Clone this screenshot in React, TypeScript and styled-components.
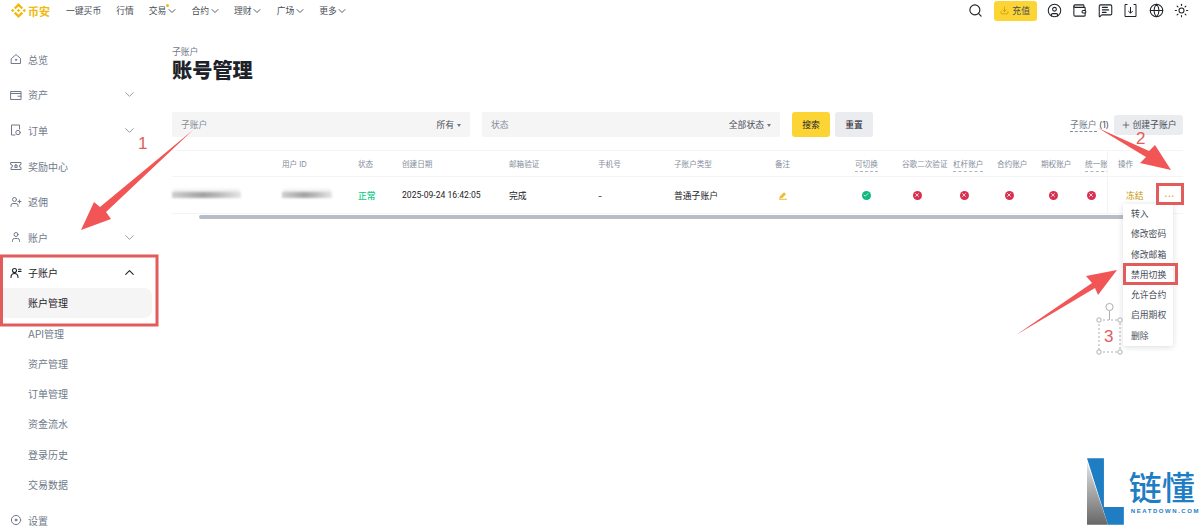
import React from 'react';
import styled, { createGlobalStyle } from 'styled-components';
import { ChevronDown, ChevronUp, CircleUser, Download, Globe, MessageSquareText, Plus, Search, Sun, UserPlus, User, Wallet, Check, X } from 'lucide-react';

const GlobalStyle = createGlobalStyle`
  html, body {
    margin: 0;
    height: 527px;
    overflow: hidden;
    background: #fff;
    color: #1e2329;
    font-family: "Inter", "Noto Sans CJK SC", sans-serif;
  }
  * { box-sizing: border-box; }
`;

const Page = styled.div`
  position: relative;
  width: 1200px;
  height: 527px;
  overflow: hidden;
`;

const TopBar = styled.header`
  display: flex;
  align-items: center;
  height: 21px;
  padding: 0 11px 0 11px;
  font-size: 8.8px;
  color: #474d57;
`;

const Logo = styled.div`
  display: flex;
  align-items: center;
  gap: 2px;
  width: 55px;
  color: #f0b90b;
  font-size: 11px;
  font-weight: 700;
`;

const TopNav = styled.nav`
  display: flex;
  align-items: center;
  gap: 15px;
`;

const TopLink = styled.span`
  position: relative;
  display: flex;
  align-items: center;
  gap: 1px;
  white-space: nowrap;

  svg {
    margin: 0 -1.5px;
  }
`;

const HotDot = styled.i`
  position: absolute;
  top: 0;
  left: 17px;
  width: 3px;
  height: 3px;
  border-radius: 50%;
  background: #f0b90b;
`;

const TopActions = styled.div`
  display: flex;
  align-items: center;
  gap: 10.4px;
  margin-left: auto;
  color: #1e2329;
`;

const DepositButton = styled.button`
  display: flex;
  align-items: center;
  justify-content: center;
  gap: 3px;
  width: 43px;
  height: 20px;
  padding: 0;
  border: 0;
  border-radius: 3px;
  background: #fcd535;
  color: #474d57;
  font: inherit;
  font-size: 8.8px;
`;

const Body = styled.div`
  display: flex;
`;

const Sidebar = styled.aside`
  flex: 0 0 172px;
  padding-top: 20.5px;
  font-size: 10px;
  color: #707a8a;
`;

const NavItem = styled.div<{ $active?: boolean }>`
  display: flex;
  align-items: center;
  height: 35.6px;
  padding: 0 35px 0 10px;
  color: ${(p) => (p.$active ? '#1e2329' : '#707a8a')};

  svg.lead {
    flex: 0 0 12px;
    margin-right: 6px;
  }
  svg.chev {
    margin-left: auto;
    color: ${(p) => (p.$active ? '#1e2329' : '#848e9c')};
  }
`;

const SettingsItem = styled(NavItem)`
  margin-top: 2.5px;
`;

const SubList = styled.div`
  margin-top: -3px;
`;

const SubItem = styled.div<{ $active?: boolean }>`
  display: flex;
  align-items: center;
  height: 30.3px;
  margin-right: 20px;
  padding-left: 28px;
  border-radius: 0 8px 8px 0;
  background: ${(p) => (p.$active ? '#f5f5f5' : 'transparent')};
  color: ${(p) => (p.$active ? '#1e2329' : '#707a8a')};
`;

const Main = styled.main`
  flex: 1;
  padding: 25px 17px 0 0;
`;

const Crumb = styled.div`
  height: 12px;
  font-size: 8.8px;
  line-height: 12px;
  color: #707a8a;
`;

const Title = styled.h1`
  margin: 0;
  font-size: 20.2px;
  line-height: 26px;
  font-weight: 900;
  color: #1e2329;
`;

const FilterRow = styled.div`
  display: flex;
  align-items: center;
  height: 25px;
  margin-top: 28px;
  font-size: 8.8px;
`;

const SelectBox = styled.div`
  display: flex;
  align-items: center;
  justify-content: space-between;
  width: 298px;
  height: 25px;
  margin-right: 12px;
  padding: 0 9px;
  border-radius: 2px;
  background: #f5f5f5;
  color: #848e9c;
`;

const SelectValue = styled.span`
  display: flex;
  align-items: center;
  gap: 3px;
  color: #474d57;

  &::after {
    content: '';
    border: 2.5px solid transparent;
    border-top: 3px solid #707a8a;
    margin-top: 3px;
  }
`;

const FilterButton = styled.button<{ $primary?: boolean }>`
  width: 38px;
  height: 25px;
  margin-right: 5px;
  padding: 0;
  border: 0;
  border-radius: 3px;
  background: ${(p) => (p.$primary ? '#fcd535' : '#eaecef')};
  color: #1e2329;
  font: inherit;
`;

const AccountCount = styled.span`
  margin-left: auto;
  color: #474d57;
  white-space: nowrap;
`;

const Dashed = styled.span`
  border-bottom: 1px dashed #848e9c;
  color: #707a8a;
  padding-bottom: 1px;
`;

const CreateButton = styled.button`
  display: flex;
  align-items: center;
  justify-content: center;
  gap: 2px;
  width: 69px;
  height: 20px;
  margin-left: 5px;
  padding: 0;
  border: 0;
  border-radius: 3px;
  background: #eaecef;
  color: #474d57;
  font: inherit;
  font-size: 8.8px;
`;

const Table = styled.div`
  position: relative;
  margin-top: 13px;
  border-top: 1px solid #f5f5f5;
`;

const columns = '110px 76px 44px 107px 89px 76px 101px 80px 47px 51px 44px 44px 44px 22px 76px';

const Row = styled.div<{ $head?: boolean }>`
  display: grid;
  grid-template-columns: ${columns};
  align-items: center;
  height: ${(p) => (p.$head ? '26px' : '37px')};
  padding-bottom: ${(p) => (p.$head ? '1px' : '0')};
  border-bottom: 1px solid #f3f4f5;
  font-size: ${(p) => (p.$head ? '7.6px' : '8.8px')};
  color: ${(p) => (p.$head ? '#848e9c' : '#1e2329')};
`;

const Clip = styled.span`
  display: block;
  overflow: hidden;
  padding: 3px 0;
  white-space: nowrap;
`;

const HeadHint = styled.span`
  border-bottom: 1px dashed #aeb4bc;
  padding-bottom: 2px;
`;

const ActionCell = styled.div<{ $head?: boolean }>`
  position: relative;
  display: flex;
  align-items: center;
  height: 100%;
  padding-left: ${(p) => (p.$head ? '10px' : '18px')};
  border-left: 1px solid #f3f4f5;
`;

const Freeze = styled.span`
  color: #c99400;
`;

const MoreDots = styled.span`
  margin: 0 0 4px 21px;
  color: #d9a93a;
  font-size: 9px;
  font-weight: 600;
  letter-spacing: 0.5px;
`;

const Blurred = styled.div<{ $w: number }>`
  width: ${(p) => p.$w}px;
  height: 6px;
  background: linear-gradient(90deg, #cfcfcf, #a2a2a2 45%, #bdbdbd 70%, #e6e6e6);
  box-shadow: 0 -4px 2px -1px #efefef;
  filter: blur(1.1px);
`;

const Active = styled.span`
  color: #0ecb81;
  font-weight: 500;
`;

const DateText = styled.span`
  font-family: "Roboto", "Noto Sans CJK SC", sans-serif;
  font-size: 8.6px;
  color: #1e2329;
`;

const IconCell = styled.div<{ $inset: number }>`
  display: flex;
  padding-left: ${(p) => p.$inset}px;
`;

const StatusDot = styled.span<{ $ok?: boolean }>`
  display: flex;
  align-items: center;
  justify-content: center;
  width: 9px;
  height: 9px;
  border-radius: 50%;
  background: ${(p) => (p.$ok ? '#10b981' : '#d9304f')};
  color: #fff;
`;

const Scrollbar = styled.div`
  width: 973px;
  height: 4px;
  margin: 1px 0 0 27px;
  border-radius: 2px;
  background: #b7bdc6;
`;

const Menu = styled.ul`
  position: absolute;
  top: 27px;
  left: 15px;
  z-index: 2;
  width: 50px;
  margin: 0;
  padding: 0;
  list-style: none;
  background: #fff;
  border-radius: 2px;
  box-shadow: 0 1px 6px rgba(0, 0, 0, 0.14);
  font-size: 8.8px;
  color: #474d57;
`;

const MenuItem = styled.li`
  height: 20.3px;
  padding-left: 8px;
  line-height: 20.3px;
  white-space: nowrap;
`;

const Overlay = styled.svg`
  position: absolute;
  inset: 0;
  z-index: 3;
  pointer-events: none;
`;

const Watermark = styled.div`
  position: absolute;
  right: 0;
  bottom: 0;
  z-index: 3;
  display: flex;
  width: 113px;
  height: 70px;
`;

const WatermarkText = styled.div`
  margin: 13px 0 0 5px;
  color: #1f7dc4;
`;

const WatermarkName = styled.div`
  font-size: 33px;
  line-height: 36px;
  font-weight: 500;
  white-space: nowrap;
`;

const WatermarkUrl = styled.div`
  margin: 2px 0 0 2px;
  font-family: "Liberation Sans", sans-serif;
  font-size: 6px;
  font-weight: 700;
  letter-spacing: 1.55px;
  white-space: nowrap;
`;

const line = { fill: 'none', stroke: 'currentColor', strokeWidth: 1, strokeLinecap: 'round', strokeLinejoin: 'round' } as const;

const BinanceMark = () => (
  <svg width="15" height="15" viewBox="0 0 24 24" fill="#f0b90b">
    <path d="M7.3 10.1L12 5.4l4.7 4.7 2.7-2.7L12 0 4.6 7.4zM0 12l2.7-2.7L5.4 12l-2.7 2.7zM7.3 13.9L12 18.6l4.7-4.7 2.7 2.7L12 24l-7.4-7.4zM18.6 12l2.7-2.7L24 12l-2.7 2.7zM14.7 12L12 9.3l-2.7 2.7 2.7 2.7z" />
  </svg>
);

const HomeIcon = () => (
  <svg className="lead" width="12" height="12" viewBox="0 0 12 12" {...line}>
    <path d="M1.5 5.5L6 1.5l4.5 4v5h-9z" />
    <circle cx="6" cy="6.8" r="0.7" />
  </svg>
);
const PurseIcon = () => (
  <svg className="lead" width="12" height="12" viewBox="0 0 12 12" {...line}>
    <path d="M1 2.5h10v8H1zM1 4.5h10M8 7.2h3" />
  </svg>
);
const OrderIcon = () => (
  <svg className="lead" width="12" height="12" viewBox="0 0 12 12" {...line}>
    <path d="M5 11H1.5V1h8v4" />
    <circle cx="8" cy="8.5" r="2.2" />
  </svg>
);
const TicketIcon = () => (
  <svg className="lead" width="12" height="12" viewBox="0 0 12 12" {...line}>
    <path d="M1 2.5h10v2a1.5 1.5 0 000 3v2H1v-2a1.5 1.5 0 000-3z" />
    <path d="M6 4.5l.6 1.1 1.1.2-.8.8.2 1.1-1.1-.5-1.1.5.2-1.1-.8-.8 1.1-.2z" />
  </svg>
);
const TeamIcon = () => (
  <svg className="lead" width="12" height="12" viewBox="0 0 12 12" {...line} strokeWidth={1.1} color="#1e2329">
    <circle cx="4.5" cy="3.5" r="2" />
    <path d="M1 10.5c0-2.5 1.5-4 3.5-4s3.5 1.5 3.5 4M8.5 2.2H11M8.5 4.4H11" />
  </svg>
);
const SettingIcon = () => (
  <svg className="lead" width="12" height="12" viewBox="0 0 12 12" {...line}>
    <circle cx="6" cy="6" r="4.6" />
    <circle cx="6" cy="6" r="0.9" fill="currentColor" />
  </svg>
);
const ImportIcon = () => (
  <svg width="15" height="15" viewBox="0 0 15 15" fill="none" stroke="currentColor" strokeWidth="1">
    <path d="M4.5 1.5h-2.500v12h11v-12h-2.500M7.500 4v6M5.300 8l2.200 2.200L9.700 8" />
  </svg>
);
const PencilIcon = () => (
  <svg width="10" height="9" viewBox="0 0 10 9" fill="#eebb33">
    <path d="M1 7.600L2.200 5 6 1.200 8 3.200 4.200 7zM1 7.800h8v1H1z" />
  </svg>
);

const sideItems = [
  { label: '总览', icon: <HomeIcon /> },
  { label: '资产', icon: <PurseIcon />, more: true },
  { label: '订单', icon: <OrderIcon />, more: true },
  { label: '奖励中心', icon: <TicketIcon /> },
  { label: '返佣', icon: <UserPlus className="lead" size={12} strokeWidth={2} /> },
  { label: '账户', icon: <User className="lead" size={12} strokeWidth={2} />, more: true },
];
const subItems = ['账户管理', 'API管理', '资产管理', '订单管理', '资金流水', '登录历史', '交易数据'];
const menuItems = ['转入', '修改密码', '修改邮箱', '禁用切换', '允许合约', '启用期权', '删除'];
const insets: [number, boolean][] = [[6.5, true], [10.5, false], [6.5, false], [7.5, false], [7.5, false], [1.5, false]];

const Annotations = () => (
  <Overlay width="1200" height="527" viewBox="0 0 1200 527">
    <g fill="#f25555">
      <polygon points="193,130 100,207 94,202 81,230 111,219 106,212" />
      <polygon points="1098,128 1149,151 1155,145 1171,170 1140,163 1146,157" />
      <polygon points="1016,335 1092,283 1086,276 1117,270 1098,295 1095,288" />
    </g>
    <g fill="none" stroke="#e25c5c" strokeWidth="3">
      <rect x="1.500" y="256" width="155.500" height="69" />
      <rect x="1157.500" y="184.500" width="25" height="19" />
      <rect x="1124.500" y="264.500" width="52" height="19" />
    </g>
    <g fill="#e25c5c" fontFamily="'Liberation Sans', sans-serif" fontSize="17">
      <text x="138" y="149">1</text>
      <text x="1136" y="144">2</text>
      <text x="1104" y="342">3</text>
    </g>
    <g fill="#fff" stroke="#9a9a9a" strokeWidth="0.8">
      <rect x="1099" y="320" width="21" height="32" fill="none" strokeDasharray="2 2" />
      <path d="M1109.500 311v9" fill="none" />
      <circle cx="1109.500" cy="307" r="3.600" />
      <circle cx="1099" cy="320" r="2.200" />
      <circle cx="1120" cy="320" r="2.200" />
      <circle cx="1099" cy="352" r="2.200" />
      <circle cx="1120" cy="352" r="2.200" />
    </g>
  </Overlay>
);

export default function App() {
  return (
    <Page>
      <GlobalStyle />
      <TopBar>
        <Logo>
          <BinanceMark />
          币安
        </Logo>
        <TopNav>
          <TopLink>一键买币</TopLink>
          <TopLink>行情</TopLink>
          {['交易', '合约', '理财', '广场', '更多'].map((name, i) => (
            <TopLink key={name}>
              {name}
              {i === 0 && <HotDot />}
              <ChevronDown size={12} strokeWidth={1.8} />
            </TopLink>
          ))}
        </TopNav>
        <TopActions>
          <Search size={15} strokeWidth={1.8} />
          <DepositButton>
            <Download size={9} strokeWidth={2} color="#c99400" />
            充值
          </DepositButton>
          <CircleUser size={15} strokeWidth={1.7} />
          <Wallet size={15} strokeWidth={1.7} />
          <MessageSquareText size={15} strokeWidth={1.7} />
          <ImportIcon />
          <Globe size={15} strokeWidth={1.7} />
          <Sun size={15} strokeWidth={1.7} />
        </TopActions>
      </TopBar>

      <Body>
        <Sidebar>
          {sideItems.map((item) => (
            <NavItem key={item.label}>
              {item.icon}
              {item.label}
              {item.more && <ChevronDown className="chev" size={15} strokeWidth={1.4} />}
            </NavItem>
          ))}
          <NavItem $active>
            <TeamIcon />
            子账户
            <ChevronUp className="chev" size={15} strokeWidth={1.8} />
          </NavItem>
          <SubList>
            {subItems.map((name, i) => (
              <SubItem key={name} $active={i === 0}>
                {name}
              </SubItem>
            ))}
          </SubList>
          <SettingsItem>
            <SettingIcon />
            设置
          </SettingsItem>
        </Sidebar>

        <Main>
          <Crumb>子账户</Crumb>
          <Title>账号管理</Title>

          <FilterRow>
            <SelectBox>
              子账户
              <SelectValue>所有</SelectValue>
            </SelectBox>
            <SelectBox>
              状态
              <SelectValue>全部状态</SelectValue>
            </SelectBox>
            <FilterButton $primary>搜索</FilterButton>
            <FilterButton>重置</FilterButton>
            <AccountCount>
              <Dashed>子账户</Dashed> (1)
            </AccountCount>
            <CreateButton>
              <Plus size={10} strokeWidth={1.8} />
              创建子账户
            </CreateButton>
          </FilterRow>

          <Table>
            <Row $head>
              <span />
              <span>用户 ID</span>
              <span>状态</span>
              <span>创建日期</span>
              <span>邮箱验证</span>
              <span>手机号</span>
              <span>子账户类型</span>
              <span>备注</span>
              <Clip><HeadHint>可切换</HeadHint></Clip>
              <Clip>谷歌二次验证</Clip>
              <Clip><HeadHint>杠杆账户</HeadHint></Clip>
              <Clip>合约账户</Clip>
              <Clip>期权账户</Clip>
              <Clip><HeadHint>统一账户</HeadHint></Clip>
              <ActionCell $head>操作</ActionCell>
            </Row>
            <Row>
              <Blurred $w={69} />
              <Blurred $w={50} />
              <Active>正常</Active>
              <DateText>2025-09-24 16:42:05</DateText>
              <span>完成</span>
              <span>-</span>
              <span>普通子账户</span>
              <IconCell $inset={3}>
                <PencilIcon />
              </IconCell>
              {insets.map(([inset, ok], i) => (
                <IconCell key={i} $inset={inset}>
                  <StatusDot $ok={ok}>
                    {ok ? <Check size={6} strokeWidth={3} /> : <X size={6} strokeWidth={3} />}
                  </StatusDot>
                </IconCell>
              ))}
              <ActionCell>
                <Freeze>冻结</Freeze>
                <MoreDots>...</MoreDots>
                <Menu>
                  {menuItems.map((name) => (
                    <MenuItem key={name}>{name}</MenuItem>
                  ))}
                </Menu>
              </ActionCell>
            </Row>
            <Scrollbar />
          </Table>
        </Main>
      </Body>

      <Annotations />

      <Watermark>
        <svg width="37" height="70" viewBox="0 0 37 70">
          <defs>
            <linearGradient id="wedge" x1="0" y1="0" x2="0" y2="1">
              <stop offset="0" stopColor="#e4e4e4" />
              <stop offset="1" stopColor="#666" />
            </linearGradient>
          </defs>
          <path d="M0 1h17v49h20v18H21z" fill="#1f7dc4" />
          <path d="M0 5l21 63H0z" fill="url(#wedge)" />
        </svg>
        <WatermarkText>
          <WatermarkName>链懂</WatermarkName>
          <WatermarkUrl>NEATDOWN.COM</WatermarkUrl>
        </WatermarkText>
      </Watermark>
    </Page>
  );
}
